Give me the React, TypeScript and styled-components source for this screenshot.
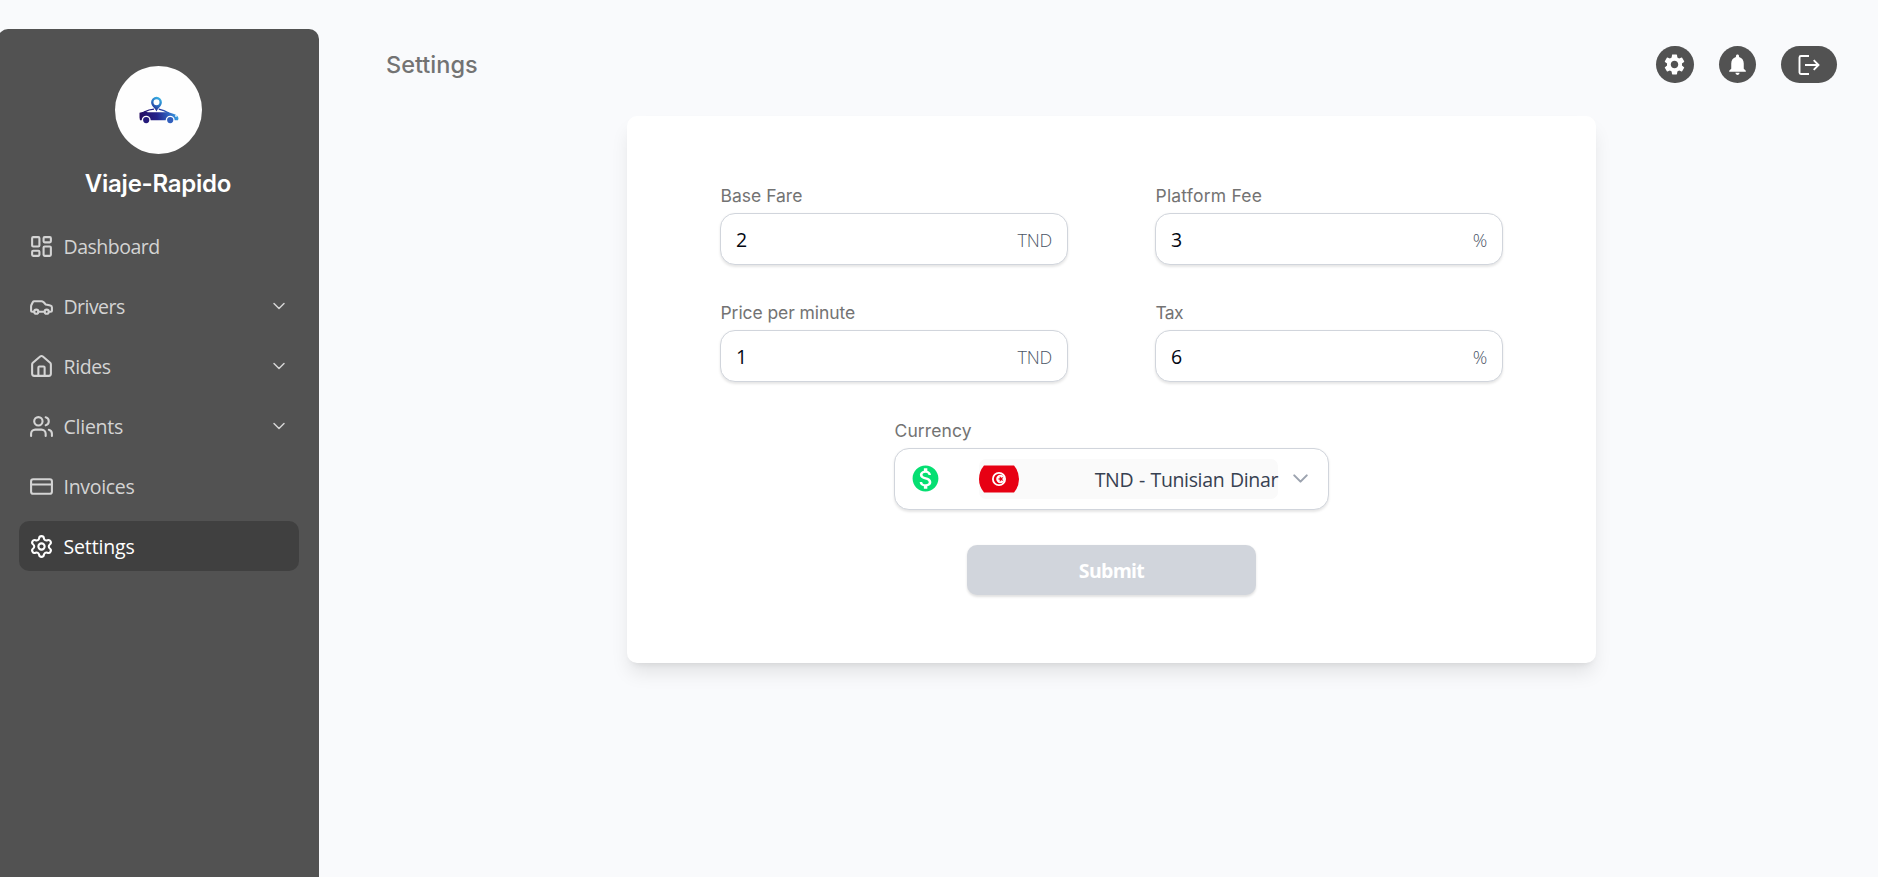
import React from 'react';
import styled, { createGlobalStyle } from 'styled-components';
import { LayoutDashboard, Car, House, Users, CreditCard, Settings, ChevronDown } from 'lucide-react';
import { MdSettings, MdNotifications, MdMonetizationOn } from 'react-icons/md';

const display = '"Inter", "Liberation Sans", sans-serif';
const body = '"Open Sans", "Noto Sans", sans-serif';

const GlobalStyle = createGlobalStyle`
  * { box-sizing: border-box; }
  body { margin: 0; background: #f9fafc; font-family: ${body}; overflow: hidden; }
`;

const Page = styled.div`
  display: flex;
  height: 877px;
  background: #f9fafc;
`;

const Sidebar = styled.aside`
  display: flex;
  flex-direction: column;
  flex: none;
  width: 321px;
  margin: 29px 0 0 -2px;
  padding: 37px 20px 0 21px;
  border-radius: 10px 10px 0 0;
  background: #525252;
`;

const Logo = styled.div`
  display: flex;
  align-items: center;
  justify-content: center;
  align-self: center;
  width: 87px;
  height: 88px;
  margin-right: 2px;
  padding-left: 1px;
  border-radius: 50%;
  background: #fefefe;
`;

const Brand = styled.h1`
  margin: 13px 2px 0 0;
  text-align: center;
  font: 600 24px/34px ${display};
  letter-spacing: -0.25px;
  color: #fff;
`;

const Nav = styled.nav`
  display: flex;
  flex-direction: column;
  gap: 10px;
  margin-top: 20px;
`;

const NavItem = styled.a<{ $active?: boolean }>`
  display: flex;
  align-items: center;
  gap: 9.5px;
  height: 50px;
  padding: 0 10px;
  border-radius: 10px;
  background: ${p => (p.$active ? '#404040' : 'transparent')};
  color: ${p => (p.$active ? '#fff' : '#d4d4d4')};
`;

const NavLabel = styled.span<{ $spacing: number }>`
  flex: 1;
  padding-top: 2px;
  font-size: 19.5px;
  line-height: 30px;
  letter-spacing: ${p => p.$spacing}px;
`;

const Main = styled.main`
  display: flex;
  flex-direction: column;
  flex: 1;
`;

const TopBar = styled.header`
  display: flex;
  align-items: center;
  justify-content: space-between;
  height: 116px;
  padding: 0 41px 0 67px;
`;

const PageTitle = styled.h2`
  margin: 13px 0 0;
  font: 500 23.5px/34px ${display};
  letter-spacing: 0;
  color: #737373;
`;

const Actions = styled.div`
  display: flex;
  gap: 25px;
  margin-top: 13px;
`;

const ActionButton = styled.button<{ $wide?: boolean }>`
  display: flex;
  align-items: center;
  justify-content: center;
  width: ${p => (p.$wide ? 56 : 37.5)}px;
  height: 37.5px;
  padding: 0;
  border: 0;
  border-radius: 19px;
  background: #525252;
  color: #fff;
`;

const Card = styled.form`
  display: flex;
  flex-direction: column;
  align-items: center;
  width: 969px;
  height: 547px;
  margin-left: 308px;
  padding: 65px 93px 0;
  border-radius: 10px;
  background: #fff;
  box-shadow: 0 12.5px 18.75px -3.75px rgba(0, 0, 0, 0.1), 0 5px 7.5px -5px rgba(0, 0, 0, 0.1);
`;

const Fields = styled.div`
  display: grid;
  grid-template-columns: 348px 348px;
  column-gap: 87px;
  row-gap: 33px;
`;

const Field = styled.label<{ $width?: number }>`
  display: flex;
  flex-direction: column;
  width: ${p => p.$width ?? 348}px;
`;

const FieldLabel = styled.span<{ $spacing?: number }>`
  height: 32px;
  padding-left: 0.5px;
  font: 400 17.5px/29px ${display};
  letter-spacing: ${p => p.$spacing ?? 0}px;
  color: #737373;
`;

const InputBox = styled.div<{ $tall?: boolean }>`
  display: flex;
  align-items: center;
  height: ${p => (p.$tall ? 62 : 52)}px;
  padding: 0 15px;
  border: 1px solid #d1d5dc;
  border-radius: 15px;
  background: #fff;
  box-shadow: 0 1.25px 2.5px rgba(0, 0, 0, 0.1);
`;

const Input = styled.input`
  flex: 1;
  min-width: 0;
  padding: 2px 0 0;
  border: 0;
  outline: 0;
  background: none;
  font: 400 19.5px/30px ${body};
  color: #030712;
`;

const Unit = styled.span`
  padding-top: 2px;
  font: 300 18px/28px ${body};
  letter-spacing: -0.25px;
  color: #4b5565;
`;

const Coin = styled.span`
  display: flex;
  flex: none;
  width: 69px;
  margin-bottom: 1px;
  color: #05df72;
`;

const CurrencyValue = styled.span`
  display: flex;
  align-items: center;
  justify-content: space-between;
  flex: none;
  width: 299px;
  height: 40px;
  margin-right: 10px;
  border-radius: 7px;
  background: #fafafa;
`;

const CurrencyName = styled.span`
  padding-top: 2px;
  font: 400 19.5px/30px ${body};
  letter-spacing: -0.36px;
  word-spacing: 1px;
  color: #374151;
  white-space: nowrap;
`;

const SelectArrow = styled(ChevronDown)`
  flex: none;
  margin-bottom: 2px;
  color: #9ca3af;
`;

const CurrencyField = styled.div`
  margin-top: 34px;
`;

const Submit = styled.button`
  width: 289px;
  height: 50px;
  margin-top: 35px;
  padding: 2px 0 0;
  border: 0;
  border-radius: 10px;
  background: #d1d5dc;
  box-shadow: 0 1.25px 2.5px rgba(0, 0, 0, 0.12);
  font: 700 19.5px/30px ${body};
  letter-spacing: -0.7px;
  color: #fff;
`;

const CarLogo = () => (
  <svg width="40" height="28" viewBox="0 0 40 28">
    <defs>
      <linearGradient id="carBody" gradientUnits="userSpaceOnUse" x1="0" x2="40" y1="22" y2="16">
        <stop offset="0" stopColor="#250a5e" />
        <stop offset="0.45" stopColor="#24238c" />
        <stop offset="0.75" stopColor="#3068c4" />
        <stop offset="1" stopColor="#3aace6" />
      </linearGradient>
      <linearGradient id="pin" x1="0.8" x2="0.3" y1="0" y2="1">
        <stop offset="0" stopColor="#39bbe8" />
        <stop offset="0.5" stopColor="#2b73c4" />
        <stop offset="1" stopColor="#27218a" />
      </linearGradient>
    </defs>
    <path
      fill="url(#carBody)"
      d="M.5 16.800 5.500 15.500 9 16.300H29.500L35 17.900Q39 19.200 39.500 22.300L39 24.300H35.700A4.500 4.500 0 0 0 26.700 24.300H11.700A4.500 4.500 0 0 0 2.700 24.300H1L.5 21.500Z"
    />
    <path fill="none" stroke="url(#carBody)" strokeWidth="1.400" d="M5 16.200Q10 13.300 15 13.100M19.800 13.100Q25 14 29.800 17.200" />
    <circle cx="7.200" cy="24.100" r="3.100" fill="#251a7b" />
    <circle cx="31.200" cy="24.100" r="3.100" fill="#315fbd" />
    <circle cx="37" cy="19.900" r="0.900" fill="#fff" />
    <path
      fill="url(#pin)"
      fillRule="evenodd"
      d="M17.500 15.500C16 11.800 12.100 10 12.100 6.200a5.400 5.400 0 0 1 10.800 0C22.900 10 19 11.800 17.500 15.500ZM17.500 3.200a3 3 0 1 0 0 6 3 3 0 0 0 0-6Z"
    />
  </svg>
);

const LogoutIcon = () => (
  <svg width="24" height="24" viewBox="0 0 24 24" fill="none" stroke="#fff" strokeWidth="1.900">
    <path d="M12 3H4Q2.500 3 2.500 4.500v15Q2.500 21 4 21h8" />
    <path d="M8 12h13.500M16.700 7.200 21.500 12l-4.800 4.800" />
  </svg>
);

const TunisiaFlag = () => (
  <svg width="40" height="28" viewBox="0 0 40 28">
    <path fill="#e70013" d="M5 .5h30q5 6 5 13.500t-5 13.500H5Q0 21.500 0 14T5 .5Z" />
    <circle cx="20" cy="14" r="7" fill="#fff" />
    <circle cx="20" cy="14" r="5.200" fill="#e70013" />
    <circle cx="21.400" cy="14" r="4.200" fill="#fff" />
    <path fill="#e70013" d="m18.600 14 2.100-.8.1-2.200 1.400 1.700 2.200-.6-1.200 1.900 1.200 1.900-2.200-.6-1.400 1.700-.1-2.200Z" />
  </svg>
);

const navItems = [
  { label: 'Dashboard', icon: LayoutDashboard, spacing: -0.5 },
  { label: 'Drivers', icon: Car, menu: true, spacing: -0.55 },
  { label: 'Rides', icon: House, menu: true, spacing: -0.4 },
  { label: 'Clients', icon: Users, menu: true, spacing: -0.25 },
  { label: 'Invoices', icon: CreditCard, spacing: -0.3 },
  { label: 'Settings', icon: Settings, active: true, spacing: -0.15 },
];

const fields = [
  { label: 'Base Fare', value: '2', unit: 'TND', spacing: 0 },
  { label: 'Platform Fee', value: '3', unit: '%', spacing: 0.2 },
  { label: 'Price per minute', value: '1', unit: 'TND', spacing: -0.08 },
  { label: 'Tax', value: '6', unit: '%', spacing: -0.7 },
];

export default function App() {
  return (
    <Page>
      <GlobalStyle />
      <Sidebar>
        <Logo><CarLogo /></Logo>
        <Brand>Viaje-Rapido</Brand>
        <Nav>
          {navItems.map(({ label, icon: Icon, menu, active, spacing }) => (
            <NavItem key={label} $active={active}>
              <Icon size={25} />
              <NavLabel $spacing={spacing}>{label}</NavLabel>
              {menu && <ChevronDown size={20} strokeWidth={1.8} />}
            </NavItem>
          ))}
        </Nav>
      </Sidebar>
      <Main>
        <TopBar>
          <PageTitle>Settings</PageTitle>
          <Actions>
            <ActionButton><MdSettings size={25} /></ActionButton>
            <ActionButton><MdNotifications size={25} /></ActionButton>
            <ActionButton $wide><LogoutIcon /></ActionButton>
          </Actions>
        </TopBar>
        <Card>
          <Fields>
            {fields.map(f => (
              <Field key={f.label}>
                <FieldLabel $spacing={f.spacing}>{f.label}</FieldLabel>
                <InputBox>
                  <Input defaultValue={f.value} />
                  <Unit>{f.unit}</Unit>
                </InputBox>
              </Field>
            ))}
          </Fields>
          <CurrencyField>
            <Field as="div" $width={435}>
              <FieldLabel $spacing={0.1}>Currency</FieldLabel>
              <InputBox $tall>
                <Coin><MdMonetizationOn size={31} /></Coin>
                <CurrencyValue>
                  <TunisiaFlag />
                  <CurrencyName>TND - Tunisian Dinar</CurrencyName>
                </CurrencyValue>
                <SelectArrow size={25} />
              </InputBox>
            </Field>
          </CurrencyField>
          <Submit type="button">Submit</Submit>
        </Card>
      </Main>
    </Page>
  );
}
